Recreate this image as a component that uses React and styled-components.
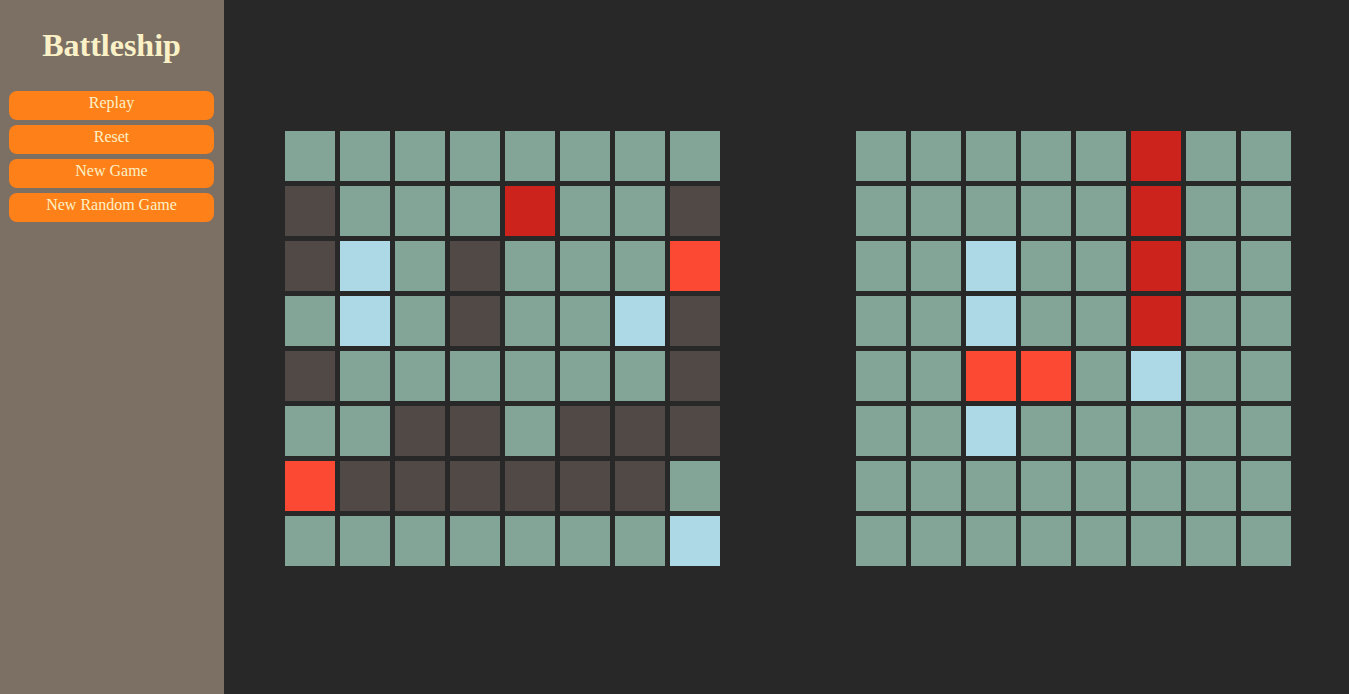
import styled, { createGlobalStyle } from "styled-components";

const G = "#83a598";
const D = "#504945";
const L = "#add8e6";
const R = "#cc241d";
const H = "#fb4934";

const playerBoard = [
  [G, G, G, G, G, G, G, G],
  [D, G, G, G, R, G, G, D],
  [D, L, G, D, G, G, G, H],
  [G, L, G, D, G, G, L, D],
  [D, G, G, G, G, G, G, D],
  [G, G, D, D, G, D, D, D],
  [H, D, D, D, D, D, D, G],
  [G, G, G, G, G, G, G, L],
];

const enemyBoard = [
  [G, G, G, G, G, R, G, G],
  [G, G, G, G, G, R, G, G],
  [G, G, L, G, G, R, G, G],
  [G, G, L, G, G, R, G, G],
  [G, G, H, H, G, L, G, G],
  [G, G, L, G, G, G, G, G],
  [G, G, G, G, G, G, G, G],
  [G, G, G, G, G, G, G, G],
];

const buttons = ["Replay", "Reset", "New Game", "New Random Game"];

function Board({ cells }) {
  return (
    <Grid>
      {cells.flat().map((color, i) => (
        <Cell key={i} $color={color} />
      ))}
    </Grid>
  );
}

export default function App() {
  return (
    <>
      <GlobalStyle />
      <Layout>
        <Sidebar>
          <Title>Battleship</Title>
          <ButtonList>
            {buttons.map((label) => (
              <Button key={label}>{label}</Button>
            ))}
          </ButtonList>
        </Sidebar>
        <Main>
          <Board cells={playerBoard} />
          <Board cells={enemyBoard} />
        </Main>
      </Layout>
    </>
  );
}

const GlobalStyle = createGlobalStyle`
  html, body {
    margin: 0;
    padding: 0;
    background: #282828;
    font-family: "Liberation Serif", "Times New Roman", serif;
  }
`;

const Layout = styled.div`
  display: flex;
  height: 694px;
  background: #282828;
`;

const Sidebar = styled.aside`
  width: 224px;
  flex-shrink: 0;
  background: #7c6f64;
  padding: 27px 10px 0 9px;
  box-sizing: border-box;
`;

const Title = styled.h1`
  margin: 0 0 27px;
  font-size: 32px;
  font-weight: bold;
  text-align: center;
  color: #fbf1c7;
`;

const ButtonList = styled.div`
  display: flex;
  flex-direction: column;
  gap: 5px;
`;

const Button = styled.button`
  height: 29px;
  padding: 3px 0 8px;
  border: none;
  border-radius: 8px;
  background: #fe8019;
  color: #fbf1c7;
  font-family: "Liberation Serif", "Times New Roman", serif;
  font-size: 16px;
  line-height: 18px;
  cursor: pointer;
`;

const Main = styled.main`
  flex: 1;
  display: flex;
  align-items: flex-start;
  gap: 136px;
  padding: 131px 0 0 61px;
`;

const Grid = styled.div`
  display: grid;
  grid-template-columns: repeat(8, 50px);
  grid-auto-rows: 50px;
  gap: 5px;
`;

const Cell = styled.div`
  background: ${({ $color }) => $color};
`;
